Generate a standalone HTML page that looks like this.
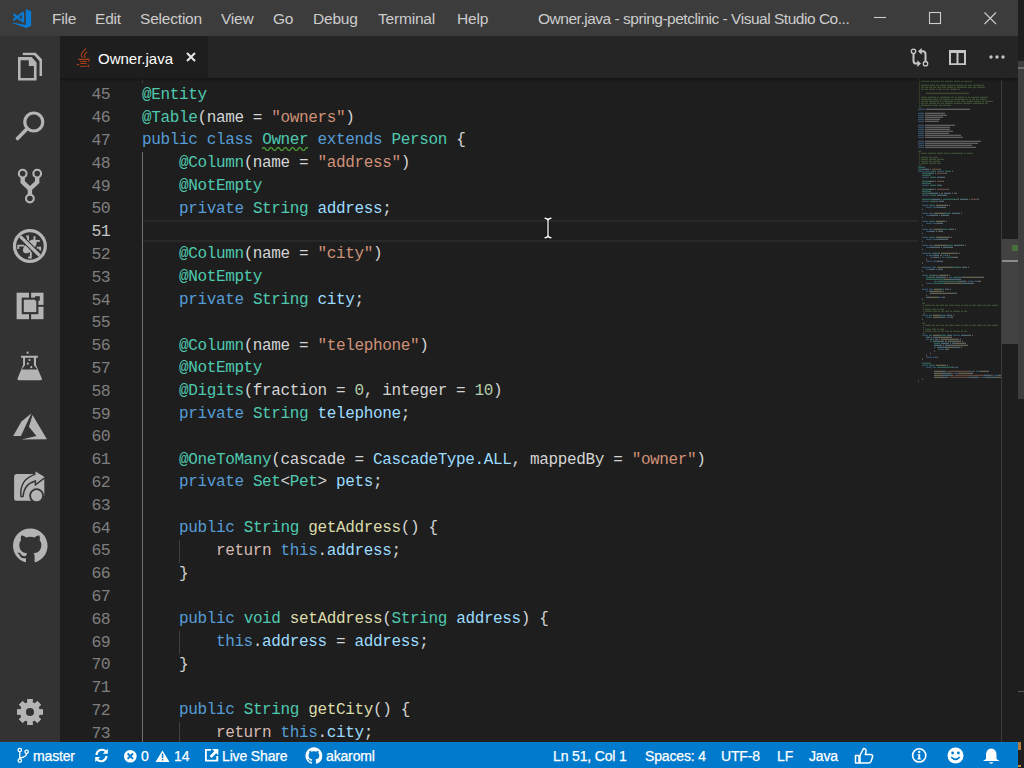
<!DOCTYPE html>
<html><head><meta charset="utf-8">
<style>
*{margin:0;padding:0;box-sizing:border-box}
html,body{width:1024px;height:768px;overflow:hidden;background:#1e1e1e;position:relative}
body{font-family:"Liberation Sans",sans-serif}
.abs{position:absolute}
#rstrip{left:1018px;top:0;width:6px;height:768px;background:#1e1e1e}
#title{left:0;top:0;width:1018px;height:36px;background:#3c3c3c;color:#cccccc;font-size:15px}
#title .m{position:absolute;top:8.6px;line-height:20px;white-space:nowrap;font-size:15.5px;letter-spacing:-0.2px}
#act{left:0;top:36px;width:60px;height:706px;background:#333333}
#tabs{left:60px;top:36px;width:958px;height:42px;background:#252526}
#tab{left:60px;top:36px;width:148px;height:42px;background:#1e1e1e;color:#fff;font-size:15px}
#editor{left:60px;top:78px;width:958px;height:664px;background:#1e1e1e;overflow:hidden}
#status{left:0;top:742px;width:1018px;height:26px;background:#007acc;color:#fff;font-size:15px}
#status .st{position:absolute;top:4px;letter-spacing:-0.15px;-webkit-text-stroke:0.25px #fff;line-height:20px;white-space:nowrap;font-size:14px}
.code{position:absolute;left:142px;font-family:"Liberation Mono",monospace;font-size:16px;letter-spacing:-0.364px;line-height:22.8px;white-space:pre;color:#d4d4d4}
.ln{position:absolute;left:60px;width:50px;margin-top:0.7px;text-align:right;font-family:"Liberation Mono",monospace;font-size:16.5px;letter-spacing:-0.7px;line-height:22.8px;color:#7e7e7e}
.ln.cur{color:#c6c6c6}
.k{color:#569cd6}.t{color:#4ec9b0}.s{color:#ce9178}.v{color:#9cdcfe}.n{color:#b5cea8}.f{color:#dcdcaa}.r{color:#d6bab2}

</style></head><body>
<div id="rstrip" class="abs"></div>
<div class="abs" style="left:1018px;top:61px;width:6px;height:338px;background:#3e3e3e"></div><div class="abs" style="left:1018px;top:67px;width:6px;height:2px;background:#6a6a6a"></div><div class="abs" style="left:1018px;top:691px;width:6px;height:1px;background:#555"></div><div class="abs" style="left:1018px;top:742px;width:3px;height:8px;background:#b87a3a"></div><div class="abs" style="left:1018px;top:765px;width:3px;height:2px;background:#c88a3a"></div>
<div id="title" class="abs">
<svg class="abs" style="left:8px;top:4px" width="28" height="28" viewBox="0 0 768 768"><g fill="#0a7ad2"><path d="M490,140L635,200V595L500,660L125,530L150,512L490,575Z"/></g><g stroke="#0a7ad2" stroke-width="58" stroke-linecap="round" fill="none"><path d="M165,290L405,478M165,428L405,240"/><path d="M412,250V472" stroke-width="62"/></g></svg><span class="m" style="left:52px">File</span><span class="m" style="left:95px">Edit</span><span class="m" style="left:140px">Selection</span><span class="m" style="left:221px">View</span><span class="m" style="left:273px">Go</span><span class="m" style="left:313px">Debug</span><span class="m" style="left:378px">Terminal</span><span class="m" style="left:457px">Help</span><span class="m" style="left:538px;letter-spacing:-0.48px">Owner.java - spring-petclinic - Visual Studio Co...</span><svg class="abs" style="left:860px;top:0" width="158" height="36" viewBox="860 0 158 36"><g stroke="#cccccc" stroke-width="1.1" fill="none"><path d="M874,17.5H886"/><rect x="929.5" y="12.5" width="11" height="11"/><path d="M984.5,12.5L996,24M996,12.5L984.5,24"/></g></svg>
</div>
<div id="act" class="abs"></div>
<svg class="abs" style="left:0;top:0" width="60" height="768" viewBox="0 0 60 768"><path fill="#b4b4b4" d="M22.8,52.7H35.6L42,59.3V76H39.5V61.3L34.4,55.2H22.8Z"/><path fill="none" stroke="#333333" stroke-width="1.6" d="M17.5,56.2H31.9L37.5,62.2"/><path fill="#b4b4b4" fill-rule="evenodd" d="M18,57H31.6L36.6,62.6V80.5H18Z M20.6,60.2H28.8V65.9H33.9V77.9H20.6Z"/><circle cx="33.8" cy="122" r="9" fill="none" stroke="#b4b4b4" stroke-width="3.2"/><path d="M26.6,129.2L17.5,138.5" stroke="#b4b4b4" stroke-width="3.6" stroke-linecap="round"/><path d="M22.7,176V182L29.9,189V194 M37.2,176V182L29.9,189" fill="none" stroke="#b4b4b4" stroke-width="4.4"/><circle cx="22.7" cy="173.6" r="4.4" fill="#333333"/><circle cx="22.7" cy="173.6" r="3.85" fill="none" stroke="#b4b4b4" stroke-width="2.1"/><circle cx="37.2" cy="173.6" r="4.4" fill="#333333"/><circle cx="37.2" cy="173.6" r="3.85" fill="none" stroke="#b4b4b4" stroke-width="2.1"/><circle cx="29.9" cy="198.5" r="4.4" fill="#333333"/><circle cx="29.9" cy="198.5" r="3.85" fill="none" stroke="#b4b4b4" stroke-width="2.1"/><circle cx="29.9" cy="246" r="15.4" fill="none" stroke="#b4b4b4" stroke-width="3.2"/><ellipse cx="29.8" cy="246.4" rx="8.6" ry="4.6" transform="rotate(-45 29.8 246.4)" fill="#b4b4b4"/><g stroke="#b4b4b4" stroke-width="1.9" fill="none"><path d="M18.2,249V245.6H24"/><path d="M26.2,236.4H28V241.5"/><path d="M34.5,236.2V240"/><path d="M35.5,240.9H39.8"/><path d="M36.8,247.7H40.2V250.5"/><path d="M30.8,252V257.5H28.2"/></g><path d="M20.2,236.4L39.7,255.7" stroke="#333333" stroke-width="5.4"/><path d="M20.2,236.4L39.7,255.7" stroke="#b4b4b4" stroke-width="3.2"/><rect x="16.6" y="292.7" width="26.9" height="26.5" fill="#b4b4b4"/><rect x="21.7" y="297.6" width="16.7" height="16.6" fill="#333333"/><rect x="23.8" y="299.7" width="12.5" height="12.4" fill="#b4b4b4"/><rect x="29" y="292" width="2.1" height="6" fill="#333333"/><rect x="29" y="314" width="2.1" height="6" fill="#333333"/><rect x="38" y="304.9" width="6" height="1.9" fill="#333333"/><rect x="35.1" y="296.2" width="4.7" height="4.5" fill="#333333"/><path d="M21,355.7H37.9V357.7H36V365L41.9,378.6Q42.5,380.3 40.6,380.3H18.8Q16.9,380.3 17.5,378.6L23.1,365V357.7H21Z" fill="#b4b4b4"/><path d="M25,357.7H33.9V365.3L37.4,369.6H21.6L25,365.3Z" fill="#333333"/><circle cx="27.6" cy="352.7" r="1.1" fill="#b4b4b4"/><circle cx="29.5" cy="360" r="1.1" fill="#b4b4b4"/><circle cx="27.8" cy="363.7" r="1.1" fill="#b4b4b4"/><circle cx="31.3" cy="367.2" r="1.1" fill="#b4b4b4"/><path d="M31.5,413.2L21.4,421.4L13.2,435.9L20.9,436.1Z" fill="#b4b4b4"/><path d="M32.6,415L46.9,439.2L21.4,439.4L36.4,436.1L28.9,426.8Z" fill="#b4b4b4"/><path d="M17,473.9H40.5Q44.3,473.9 44.3,477.7V500.8H17Q14.1,500.8 14.1,497.9V476.8Q14.1,473.9 17,473.9Z" fill="#b4b4b4"/><rect x="36.6" y="495.7" width="9" height="7" fill="#333333"/><circle cx="36.6" cy="495.7" r="7.4" fill="#333333"/><circle cx="36.6" cy="495.7" r="5.6" fill="#b4b4b4"/><path d="M21,496.5Q19,480 34.8,474.3V470.2L45.8,477L35.4,484.8V481Q24,484 23,496.5Z" fill="#b4b4b4" stroke="#333333" stroke-width="1.4"/><g transform="translate(13,528.5) scale(2.16)"><path fill="#b4b4b4" d="M8 0C3.58 0 0 3.58 0 8c0 3.54 2.29 6.53 5.47 7.59.4.07.55-.17.55-.38 0-.19-.01-.82-.01-1.49-2.01.37-2.53-.49-2.69-.94-.09-.23-.48-.94-.82-1.13-.28-.15-.68-.52-.01-.53.63-.01 1.08.58 1.23.82.72 1.21 1.87.87 2.33.66.07-.52.28-.87.51-1.07-1.78-.2-3.64-.89-3.64-3.95 0-.87.31-1.59.82-2.15-.08-.2-.36-1.02.08-2.12 0 0 .67-.21 2.2.82.64-.18 1.32-.27 2-.27.68 0 1.36.09 2 .27 1.53-1.04 2.2-.82 2.2-.82.44 1.1.16 1.92.08 2.12.51.56.82 1.27.82 2.15 0 3.07-1.87 3.75-3.65 3.95.29.25.54.73.54 1.48 0 1.07-.01 1.93-.01 2.2 0 .21.15.46.55.38A8.013 8.013 0 0016 8c0-4.42-3.58-8-8-8z"/></g><circle cx="30" cy="712" r="10" fill="#b4b4b4"/><rect x="27.4" y="699" width="5.2" height="26" fill="#b4b4b4" transform="rotate(0 30 712)"/><rect x="27.4" y="699" width="5.2" height="26" fill="#b4b4b4" transform="rotate(45 30 712)"/><rect x="27.4" y="699" width="5.2" height="26" fill="#b4b4b4" transform="rotate(90 30 712)"/><rect x="27.4" y="699" width="5.2" height="26" fill="#b4b4b4" transform="rotate(135 30 712)"/><rect x="27.4" y="699" width="5.2" height="26" fill="#b4b4b4" transform="rotate(180 30 712)"/><rect x="27.4" y="699" width="5.2" height="26" fill="#b4b4b4" transform="rotate(225 30 712)"/><rect x="27.4" y="699" width="5.2" height="26" fill="#b4b4b4" transform="rotate(270 30 712)"/><rect x="27.4" y="699" width="5.2" height="26" fill="#b4b4b4" transform="rotate(315 30 712)"/><circle cx="30" cy="712" r="4" fill="#333333"/></svg>
<div id="tabs" class="abs"></div>
<div id="tab" class="abs"><svg class="abs" style="left:14px;top:10px" width="20" height="24" viewBox="74 46 20 24"><g stroke="#a83f1b" stroke-width="1.1" fill="none" stroke-linecap="round"><path d="M85.6,48.8C84,51 81,53 81.2,55C81.3,56.5 82.4,57.3 82.4,57.3"/><path d="M86.8,52.2C84.5,53.5 83.8,55 85,57.6"/><path d="M78.5,59.4H87.5"/><path d="M80.3,61.5H86.5"/><path d="M80.6,63.5H86.2"/><path d="M80.5,66.2H87"/><path d="M77.2,64.6H78.8"/><path d="M87.8,58.5Q90.5,59 88.5,61"/><path d="M88,65Q89.5,65.5 88.5,66.5"/></g></svg><span class="abs" style="left:38px;top:13px;line-height:20px;white-space:nowrap">Owner.java</span><svg class="abs" style="left:126px;top:16px" width="10" height="10" viewBox="0 0 10 10"><path d="M1,1L9,9M9,1L1,9" stroke="#e8e8e8" stroke-width="2"/></svg></div>
<svg class="abs" style="left:900px;top:36px" width="118" height="42" viewBox="900 36 118 42"><g stroke="#c5c5c5" fill="none"><circle cx="913.5" cy="51.3" r="2.2" stroke-width="1.3"/><circle cx="925.5" cy="63.7" r="2.2" stroke-width="1.3"/><path d="M913.5,53.5V60.7Q913.5,63.6 916.4,63.6H918" stroke-width="2"/><path d="M925.5,61.5V54.3Q925.5,51.3 922.6,51.3H921" stroke-width="2"/></g><g fill="#c5c5c5"><path d="M917.3,60.2L921,63.6L917.3,67Z"/><path d="M921.7,47.9L918,51.3L921.7,54.7Z"/></g><g fill="#c5c5c5"><path fill-rule="evenodd" d="M949,50H966V65H949Z M951,53H956.5V63.2H951Z M958.5,53H964V63.2H958.5Z"/><circle cx="991" cy="57" r="1.7"/><circle cx="997" cy="57" r="1.7"/><circle cx="1003" cy="57" r="1.7"/></g></svg>
<div id="editor" class="abs"></div>
<div class="abs" style="left:143px;top:220px;width:775px;height:22px;border-top:2px solid #282828;border-bottom:2px solid #282828"></div>
<div class="abs" style="left:142px;top:78.0px;width:1px;height:4.8px;background:#404040"></div>
<div class="abs" style="left:142px;top:152.2px;width:1px;height:589.8px;background:#707070"></div>
<div class="abs" style="left:179px;top:539.8px;width:1px;height:22.8px;background:#404040"></div>
<div class="abs" style="left:179px;top:631.0px;width:1px;height:22.8px;background:#404040"></div>
<div class="abs" style="left:179px;top:722.2px;width:1px;height:19.8px;background:#404040"></div>
<div class="ln" style="top:83.8px">45</div>
<div class="code" style="top:83.8px"><span class="t">@Entity</span></div>
<div class="ln" style="top:106.6px">46</div>
<div class="code" style="top:106.6px"><span class="t">@Table</span>(name = <span class="s">"owners"</span>)</div>
<div class="ln" style="top:129.4px">47</div>
<div class="code" style="top:129.4px"><span class="k">public</span> <span class="k">class</span> <span class="t">Owner</span> <span class="k">extends</span> <span class="t">Person</span> {</div>
<div class="ln" style="top:152.2px">48</div>
<div class="code" style="top:152.2px">    <span class="t">@Column</span>(name = <span class="s">"address"</span>)</div>
<div class="ln" style="top:175.0px">49</div>
<div class="code" style="top:175.0px">    <span class="t">@NotEmpty</span></div>
<div class="ln" style="top:197.8px">50</div>
<div class="code" style="top:197.8px">    <span class="k">private</span> <span class="t">String</span> <span class="v">address</span>;</div>
<div class="ln cur" style="top:220.6px">51</div>
<div class="ln" style="top:243.4px">52</div>
<div class="code" style="top:243.4px">    <span class="t">@Column</span>(name = <span class="s">"city"</span>)</div>
<div class="ln" style="top:266.2px">53</div>
<div class="code" style="top:266.2px">    <span class="t">@NotEmpty</span></div>
<div class="ln" style="top:289.0px">54</div>
<div class="code" style="top:289.0px">    <span class="k">private</span> <span class="t">String</span> <span class="v">city</span>;</div>
<div class="ln" style="top:311.8px">55</div>
<div class="ln" style="top:334.6px">56</div>
<div class="code" style="top:334.6px">    <span class="t">@Column</span>(name = <span class="s">"telephone"</span>)</div>
<div class="ln" style="top:357.4px">57</div>
<div class="code" style="top:357.4px">    <span class="t">@NotEmpty</span></div>
<div class="ln" style="top:380.2px">58</div>
<div class="code" style="top:380.2px">    <span class="t">@Digits</span>(fraction = <span class="n">0</span>, integer = <span class="n">10</span>)</div>
<div class="ln" style="top:403.0px">59</div>
<div class="code" style="top:403.0px">    <span class="k">private</span> <span class="t">String</span> <span class="v">telephone</span>;</div>
<div class="ln" style="top:425.8px">60</div>
<div class="ln" style="top:448.6px">61</div>
<div class="code" style="top:448.6px">    <span class="t">@OneToMany</span>(cascade = <span class="v">CascadeType.ALL</span>, mappedBy = <span class="s">"owner"</span>)</div>
<div class="ln" style="top:471.4px">62</div>
<div class="code" style="top:471.4px">    <span class="k">private</span> <span class="t">Set</span>&lt;<span class="t">Pet</span>&gt; <span class="v">pets</span>;</div>
<div class="ln" style="top:494.2px">63</div>
<div class="ln" style="top:517.0px">64</div>
<div class="code" style="top:517.0px">    <span class="k">public</span> <span class="t">String</span> <span class="f">getAddress</span>() {</div>
<div class="ln" style="top:539.8px">65</div>
<div class="code" style="top:539.8px">        <span class="r">return</span> <span class="k">this</span>.<span class="v">address</span>;</div>
<div class="ln" style="top:562.6px">66</div>
<div class="code" style="top:562.6px">    }</div>
<div class="ln" style="top:585.4px">67</div>
<div class="ln" style="top:608.2px">68</div>
<div class="code" style="top:608.2px">    <span class="k">public</span> <span class="t">void</span> <span class="f">setAddress</span>(<span class="t">String</span> <span class="v">address</span>) {</div>
<div class="ln" style="top:631.0px">69</div>
<div class="code" style="top:631.0px">        <span class="k">this</span>.<span class="v">address</span> = <span class="v">address</span>;</div>
<div class="ln" style="top:653.8px">70</div>
<div class="code" style="top:653.8px">    }</div>
<div class="ln" style="top:676.6px">71</div>
<div class="ln" style="top:699.4px">72</div>
<div class="code" style="top:699.4px">    <span class="k">public</span> <span class="t">String</span> <span class="f">getCity</span>() {</div>
<div class="ln" style="top:722.2px">73</div>
<div class="code" style="top:722.2px">        <span class="r">return</span> <span class="k">this</span>.<span class="v">city</span>;</div>
<svg class="abs" style="left:262px;top:146px" width="46" height="5" viewBox="0 0 46 5"><path d="M0,3 q1.8,-3.2 3.6,0 t3.6,0 q1.8,-3.2 3.6,0 t3.6,0 q1.8,-3.2 3.6,0 t3.6,0 q1.8,-3.2 3.6,0 t3.6,0 q1.8,-3.2 3.6,0 t3.6,0 q1.8,-3.2 3.6,0 t3.6,0 q1.8,-3.2 3.6,0 t3.6,0" fill="none" stroke="#4a9638" stroke-width="1.5"/></svg>
<svg class="abs" style="left:918px;top:78px" width="84" height="320" viewBox="918 78 84 320"><g opacity="0.36"><rect x="918" y="78.7" width="2" height="1.3" fill="#6a9955"/><rect x="919" y="80.7" width="1" height="1.3" fill="#6a9955"/><rect x="921" y="80.7" width="9" height="1.3" fill="#6a9955"/><rect x="931" y="80.7" width="9" height="1.3" fill="#6a9955"/><rect x="941" y="80.7" width="3" height="1.3" fill="#6a9955"/><rect x="945" y="80.7" width="8" height="1.3" fill="#6a9955"/><rect x="954" y="80.7" width="6" height="1.3" fill="#6a9955"/><rect x="961" y="80.7" width="2" height="1.3" fill="#6a9955"/><rect x="964" y="80.7" width="8" height="1.3" fill="#6a9955"/><rect x="919" y="82.7" width="1" height="1.3" fill="#6a9955"/><rect x="919" y="84.7" width="1" height="1.3" fill="#6a9955"/><rect x="921" y="84.7" width="8" height="1.3" fill="#6a9955"/><rect x="930" y="84.7" width="5" height="1.3" fill="#6a9955"/><rect x="936" y="84.7" width="3" height="1.3" fill="#6a9955"/><rect x="940" y="84.7" width="6" height="1.3" fill="#6a9955"/><rect x="947" y="84.7" width="8" height="1.3" fill="#6a9955"/><rect x="956" y="84.7" width="7" height="1.3" fill="#6a9955"/><rect x="964" y="84.7" width="3" height="1.3" fill="#6a9955"/><rect x="968" y="84.7" width="4" height="1.3" fill="#6a9955"/><rect x="973" y="84.7" width="11" height="1.3" fill="#6a9955"/><rect x="919" y="86.7" width="1" height="1.3" fill="#6a9955"/><rect x="921" y="86.7" width="3" height="1.3" fill="#6a9955"/><rect x="925" y="86.7" width="3" height="1.3" fill="#6a9955"/><rect x="929" y="86.7" width="3" height="1.3" fill="#6a9955"/><rect x="933" y="86.7" width="3" height="1.3" fill="#6a9955"/><rect x="937" y="86.7" width="4" height="1.3" fill="#6a9955"/><rect x="942" y="86.7" width="4" height="1.3" fill="#6a9955"/><rect x="947" y="86.7" width="6" height="1.3" fill="#6a9955"/><rect x="954" y="86.7" width="2" height="1.3" fill="#6a9955"/><rect x="957" y="86.7" width="10" height="1.3" fill="#6a9955"/><rect x="968" y="86.7" width="4" height="1.3" fill="#6a9955"/><rect x="973" y="86.7" width="3" height="1.3" fill="#6a9955"/><rect x="977" y="86.7" width="8" height="1.3" fill="#6a9955"/><rect x="919" y="88.7" width="1" height="1.3" fill="#6a9955"/><rect x="921" y="88.7" width="3" height="1.3" fill="#6a9955"/><rect x="925" y="88.7" width="3" height="1.3" fill="#6a9955"/><rect x="929" y="88.7" width="6" height="1.3" fill="#6a9955"/><rect x="936" y="88.7" width="1" height="1.3" fill="#6a9955"/><rect x="938" y="88.7" width="4" height="1.3" fill="#6a9955"/><rect x="943" y="88.7" width="2" height="1.3" fill="#6a9955"/><rect x="946" y="88.7" width="3" height="1.3" fill="#6a9955"/><rect x="950" y="88.7" width="7" height="1.3" fill="#6a9955"/><rect x="958" y="88.7" width="2" height="1.3" fill="#6a9955"/><rect x="919" y="90.7" width="1" height="1.3" fill="#6a9955"/><rect x="919" y="92.7" width="1" height="1.3" fill="#6a9955"/><rect x="926" y="92.7" width="43" height="1.3" fill="#6a9955"/><rect x="919" y="94.7" width="1" height="1.3" fill="#6a9955"/><rect x="919" y="96.7" width="1" height="1.3" fill="#6a9955"/><rect x="921" y="96.7" width="6" height="1.3" fill="#6a9955"/><rect x="928" y="96.7" width="8" height="1.3" fill="#6a9955"/><rect x="937" y="96.7" width="2" height="1.3" fill="#6a9955"/><rect x="940" y="96.7" width="10" height="1.3" fill="#6a9955"/><rect x="951" y="96.7" width="3" height="1.3" fill="#6a9955"/><rect x="955" y="96.7" width="2" height="1.3" fill="#6a9955"/><rect x="958" y="96.7" width="6" height="1.3" fill="#6a9955"/><rect x="965" y="96.7" width="2" height="1.3" fill="#6a9955"/><rect x="968" y="96.7" width="2" height="1.3" fill="#6a9955"/><rect x="971" y="96.7" width="8" height="1.3" fill="#6a9955"/><rect x="980" y="96.7" width="8" height="1.3" fill="#6a9955"/><rect x="919" y="98.7" width="1" height="1.3" fill="#6a9955"/><rect x="921" y="98.7" width="11" height="1.3" fill="#6a9955"/><rect x="933" y="98.7" width="5" height="1.3" fill="#6a9955"/><rect x="939" y="98.7" width="3" height="1.3" fill="#6a9955"/><rect x="943" y="98.7" width="7" height="1.3" fill="#6a9955"/><rect x="951" y="98.7" width="2" height="1.3" fill="#6a9955"/><rect x="954" y="98.7" width="11" height="1.3" fill="#6a9955"/><rect x="966" y="98.7" width="2" height="1.3" fill="#6a9955"/><rect x="969" y="98.7" width="2" height="1.3" fill="#6a9955"/><rect x="972" y="98.7" width="3" height="1.3" fill="#6a9955"/><rect x="976" y="98.7" width="3" height="1.3" fill="#6a9955"/><rect x="980" y="98.7" width="6" height="1.3" fill="#6a9955"/><rect x="919" y="100.7" width="1" height="1.3" fill="#6a9955"/><rect x="921" y="100.7" width="7" height="1.3" fill="#6a9955"/><rect x="929" y="100.7" width="10" height="1.3" fill="#6a9955"/><rect x="940" y="100.7" width="2" height="1.3" fill="#6a9955"/><rect x="943" y="100.7" width="10" height="1.3" fill="#6a9955"/><rect x="954" y="100.7" width="2" height="1.3" fill="#6a9955"/><rect x="957" y="100.7" width="3" height="1.3" fill="#6a9955"/><rect x="961" y="100.7" width="5" height="1.3" fill="#6a9955"/><rect x="967" y="100.7" width="6" height="1.3" fill="#6a9955"/><rect x="974" y="100.7" width="7" height="1.3" fill="#6a9955"/><rect x="982" y="100.7" width="2" height="1.3" fill="#6a9955"/><rect x="985" y="100.7" width="8" height="1.3" fill="#6a9955"/><rect x="919" y="102.7" width="1" height="1.3" fill="#6a9955"/><rect x="921" y="102.7" width="3" height="1.3" fill="#6a9955"/><rect x="925" y="102.7" width="3" height="1.3" fill="#6a9955"/><rect x="929" y="102.7" width="7" height="1.3" fill="#6a9955"/><rect x="937" y="102.7" width="3" height="1.3" fill="#6a9955"/><rect x="941" y="102.7" width="3" height="1.3" fill="#6a9955"/><rect x="945" y="102.7" width="8" height="1.3" fill="#6a9955"/><rect x="954" y="102.7" width="8" height="1.3" fill="#6a9955"/><rect x="963" y="102.7" width="9" height="1.3" fill="#6a9955"/><rect x="973" y="102.7" width="11" height="1.3" fill="#6a9955"/><rect x="985" y="102.7" width="3" height="1.3" fill="#6a9955"/><rect x="919" y="104.7" width="1" height="1.3" fill="#6a9955"/><rect x="921" y="104.7" width="11" height="1.3" fill="#6a9955"/><rect x="933" y="104.7" width="5" height="1.3" fill="#6a9955"/><rect x="939" y="104.7" width="3" height="1.3" fill="#6a9955"/><rect x="943" y="104.7" width="8" height="1.3" fill="#6a9955"/><rect x="919" y="106.7" width="2" height="1.3" fill="#6a9955"/><rect x="918" y="108.7" width="7" height="1.3" fill="#569cd6"/><rect x="926" y="108.7" width="44" height="1.3" fill="#d4d4d4"/><rect x="918" y="112.7" width="6" height="1.3" fill="#569cd6"/><rect x="925" y="112.7" width="20" height="1.3" fill="#d4d4d4"/><rect x="918" y="114.7" width="6" height="1.3" fill="#569cd6"/><rect x="925" y="114.7" width="22" height="1.3" fill="#d4d4d4"/><rect x="918" y="116.7" width="6" height="1.3" fill="#569cd6"/><rect x="925" y="116.7" width="18" height="1.3" fill="#d4d4d4"/><rect x="918" y="118.7" width="6" height="1.3" fill="#569cd6"/><rect x="925" y="118.7" width="15" height="1.3" fill="#d4d4d4"/><rect x="918" y="120.7" width="6" height="1.3" fill="#569cd6"/><rect x="925" y="120.7" width="14" height="1.3" fill="#d4d4d4"/><rect x="918" y="124.7" width="6" height="1.3" fill="#569cd6"/><rect x="925" y="124.7" width="30" height="1.3" fill="#d4d4d4"/><rect x="918" y="126.7" width="6" height="1.3" fill="#569cd6"/><rect x="925" y="126.7" width="25" height="1.3" fill="#d4d4d4"/><rect x="918" y="128.7" width="6" height="1.3" fill="#569cd6"/><rect x="925" y="128.7" width="25" height="1.3" fill="#d4d4d4"/><rect x="918" y="130.7" width="6" height="1.3" fill="#569cd6"/><rect x="925" y="130.7" width="28" height="1.3" fill="#d4d4d4"/><rect x="918" y="132.7" width="6" height="1.3" fill="#569cd6"/><rect x="925" y="132.7" width="24" height="1.3" fill="#d4d4d4"/><rect x="918" y="134.7" width="6" height="1.3" fill="#569cd6"/><rect x="925" y="134.7" width="36" height="1.3" fill="#d4d4d4"/><rect x="918" y="136.7" width="6" height="1.3" fill="#569cd6"/><rect x="925" y="136.7" width="38" height="1.3" fill="#d4d4d4"/><rect x="918" y="140.7" width="6" height="1.3" fill="#569cd6"/><rect x="925" y="140.7" width="56" height="1.3" fill="#d4d4d4"/><rect x="918" y="142.7" width="6" height="1.3" fill="#569cd6"/><rect x="925" y="142.7" width="53" height="1.3" fill="#d4d4d4"/><rect x="918" y="144.7" width="6" height="1.3" fill="#569cd6"/><rect x="925" y="144.7" width="47" height="1.3" fill="#d4d4d4"/><rect x="918" y="146.7" width="6" height="1.3" fill="#569cd6"/><rect x="925" y="146.7" width="51" height="1.3" fill="#d4d4d4"/><rect x="918" y="150.7" width="3" height="1.3" fill="#6a9955"/><rect x="919" y="152.7" width="1" height="1.3" fill="#6a9955"/><rect x="921" y="152.7" width="6" height="1.3" fill="#6a9955"/><rect x="928" y="152.7" width="8" height="1.3" fill="#6a9955"/><rect x="937" y="152.7" width="6" height="1.3" fill="#6a9955"/><rect x="944" y="152.7" width="6" height="1.3" fill="#6a9955"/><rect x="951" y="152.7" width="12" height="1.3" fill="#6a9955"/><rect x="964" y="152.7" width="2" height="1.3" fill="#6a9955"/><rect x="967" y="152.7" width="6" height="1.3" fill="#6a9955"/><rect x="919" y="154.7" width="1" height="1.3" fill="#6a9955"/><rect x="919" y="156.7" width="1" height="1.3" fill="#6a9955"/><rect x="921" y="156.7" width="7" height="1.3" fill="#6a9955"/><rect x="929" y="156.7" width="3" height="1.3" fill="#6a9955"/><rect x="933" y="156.7" width="5" height="1.3" fill="#6a9955"/><rect x="919" y="158.7" width="1" height="1.3" fill="#6a9955"/><rect x="921" y="158.7" width="7" height="1.3" fill="#6a9955"/><rect x="929" y="158.7" width="7" height="1.3" fill="#6a9955"/><rect x="937" y="158.7" width="7" height="1.3" fill="#6a9955"/><rect x="919" y="160.7" width="1" height="1.3" fill="#6a9955"/><rect x="921" y="160.7" width="7" height="1.3" fill="#6a9955"/><rect x="929" y="160.7" width="3" height="1.3" fill="#6a9955"/><rect x="933" y="160.7" width="7" height="1.3" fill="#6a9955"/><rect x="919" y="162.7" width="1" height="1.3" fill="#6a9955"/><rect x="921" y="162.7" width="7" height="1.3" fill="#6a9955"/><rect x="929" y="162.7" width="7" height="1.3" fill="#6a9955"/><rect x="937" y="162.7" width="4" height="1.3" fill="#6a9955"/><rect x="919" y="164.7" width="2" height="1.3" fill="#6a9955"/><rect x="918" y="166.7" width="7" height="1.3" fill="#4ec9b0"/><rect x="918" y="168.7" width="6" height="1.3" fill="#4ec9b0"/><rect x="924" y="168.7" width="1" height="1.3" fill="#d4d4d4"/><rect x="925" y="168.7" width="4" height="1.3" fill="#9cdcfe"/><rect x="930" y="168.7" width="1" height="1.3" fill="#d4d4d4"/><rect x="932" y="168.7" width="8" height="1.3" fill="#ce9178"/><rect x="940" y="168.7" width="1" height="1.3" fill="#d4d4d4"/><rect x="918" y="170.7" width="6" height="1.3" fill="#569cd6"/><rect x="925" y="170.7" width="5" height="1.3" fill="#569cd6"/><rect x="931" y="170.7" width="5" height="1.3" fill="#4ec9b0"/><rect x="937" y="170.7" width="7" height="1.3" fill="#569cd6"/><rect x="945" y="170.7" width="6" height="1.3" fill="#4ec9b0"/><rect x="952" y="170.7" width="1" height="1.3" fill="#d4d4d4"/><rect x="922" y="172.7" width="7" height="1.3" fill="#4ec9b0"/><rect x="929" y="172.7" width="1" height="1.3" fill="#d4d4d4"/><rect x="930" y="172.7" width="4" height="1.3" fill="#9cdcfe"/><rect x="935" y="172.7" width="1" height="1.3" fill="#d4d4d4"/><rect x="937" y="172.7" width="9" height="1.3" fill="#ce9178"/><rect x="946" y="172.7" width="1" height="1.3" fill="#d4d4d4"/><rect x="922" y="174.7" width="9" height="1.3" fill="#4ec9b0"/><rect x="922" y="176.7" width="7" height="1.3" fill="#569cd6"/><rect x="930" y="176.7" width="6" height="1.3" fill="#4ec9b0"/><rect x="937" y="176.7" width="7" height="1.3" fill="#9cdcfe"/><rect x="944" y="176.7" width="1" height="1.3" fill="#d4d4d4"/><rect x="922" y="180.7" width="7" height="1.3" fill="#4ec9b0"/><rect x="929" y="180.7" width="1" height="1.3" fill="#d4d4d4"/><rect x="930" y="180.7" width="4" height="1.3" fill="#9cdcfe"/><rect x="935" y="180.7" width="1" height="1.3" fill="#d4d4d4"/><rect x="937" y="180.7" width="6" height="1.3" fill="#ce9178"/><rect x="943" y="180.7" width="1" height="1.3" fill="#d4d4d4"/><rect x="922" y="182.7" width="9" height="1.3" fill="#4ec9b0"/><rect x="922" y="184.7" width="7" height="1.3" fill="#569cd6"/><rect x="930" y="184.7" width="6" height="1.3" fill="#4ec9b0"/><rect x="937" y="184.7" width="4" height="1.3" fill="#9cdcfe"/><rect x="941" y="184.7" width="1" height="1.3" fill="#d4d4d4"/><rect x="922" y="188.7" width="7" height="1.3" fill="#4ec9b0"/><rect x="929" y="188.7" width="1" height="1.3" fill="#d4d4d4"/><rect x="930" y="188.7" width="4" height="1.3" fill="#9cdcfe"/><rect x="935" y="188.7" width="1" height="1.3" fill="#d4d4d4"/><rect x="937" y="188.7" width="11" height="1.3" fill="#ce9178"/><rect x="948" y="188.7" width="1" height="1.3" fill="#d4d4d4"/><rect x="922" y="190.7" width="9" height="1.3" fill="#4ec9b0"/><rect x="922" y="192.7" width="7" height="1.3" fill="#4ec9b0"/><rect x="929" y="192.7" width="1" height="1.3" fill="#d4d4d4"/><rect x="930" y="192.7" width="8" height="1.3" fill="#9cdcfe"/><rect x="939" y="192.7" width="1" height="1.3" fill="#d4d4d4"/><rect x="941" y="192.7" width="1" height="1.3" fill="#b5cea8"/><rect x="942" y="192.7" width="1" height="1.3" fill="#d4d4d4"/><rect x="944" y="192.7" width="7" height="1.3" fill="#9cdcfe"/><rect x="952" y="192.7" width="1" height="1.3" fill="#d4d4d4"/><rect x="954" y="192.7" width="2" height="1.3" fill="#b5cea8"/><rect x="956" y="192.7" width="1" height="1.3" fill="#d4d4d4"/><rect x="922" y="194.7" width="7" height="1.3" fill="#569cd6"/><rect x="930" y="194.7" width="6" height="1.3" fill="#4ec9b0"/><rect x="937" y="194.7" width="9" height="1.3" fill="#9cdcfe"/><rect x="946" y="194.7" width="1" height="1.3" fill="#d4d4d4"/><rect x="922" y="198.7" width="10" height="1.3" fill="#4ec9b0"/><rect x="932" y="198.7" width="1" height="1.3" fill="#d4d4d4"/><rect x="933" y="198.7" width="7" height="1.3" fill="#9cdcfe"/><rect x="941" y="198.7" width="1" height="1.3" fill="#d4d4d4"/><rect x="943" y="198.7" width="11" height="1.3" fill="#4ec9b0"/><rect x="954" y="198.7" width="1" height="1.3" fill="#d4d4d4"/><rect x="955" y="198.7" width="3" height="1.3" fill="#4ec9b0"/><rect x="958" y="198.7" width="1" height="1.3" fill="#d4d4d4"/><rect x="960" y="198.7" width="8" height="1.3" fill="#9cdcfe"/><rect x="969" y="198.7" width="1" height="1.3" fill="#d4d4d4"/><rect x="971" y="198.7" width="7" height="1.3" fill="#ce9178"/><rect x="978" y="198.7" width="1" height="1.3" fill="#d4d4d4"/><rect x="922" y="200.7" width="7" height="1.3" fill="#569cd6"/><rect x="930" y="200.7" width="3" height="1.3" fill="#4ec9b0"/><rect x="933" y="200.7" width="1" height="1.3" fill="#d4d4d4"/><rect x="934" y="200.7" width="3" height="1.3" fill="#4ec9b0"/><rect x="937" y="200.7" width="1" height="1.3" fill="#d4d4d4"/><rect x="939" y="200.7" width="4" height="1.3" fill="#9cdcfe"/><rect x="943" y="200.7" width="1" height="1.3" fill="#d4d4d4"/><rect x="922" y="204.7" width="6" height="1.3" fill="#569cd6"/><rect x="929" y="204.7" width="6" height="1.3" fill="#4ec9b0"/><rect x="936" y="204.7" width="10" height="1.3" fill="#dcdcaa"/><rect x="946" y="204.7" width="2" height="1.3" fill="#d4d4d4"/><rect x="949" y="204.7" width="1" height="1.3" fill="#d4d4d4"/><rect x="926" y="206.7" width="6" height="1.3" fill="#569cd6"/><rect x="933" y="206.7" width="4" height="1.3" fill="#569cd6"/><rect x="937" y="206.7" width="1" height="1.3" fill="#d4d4d4"/><rect x="938" y="206.7" width="7" height="1.3" fill="#9cdcfe"/><rect x="945" y="206.7" width="1" height="1.3" fill="#d4d4d4"/><rect x="922" y="208.7" width="1" height="1.3" fill="#d4d4d4"/><rect x="922" y="212.7" width="6" height="1.3" fill="#569cd6"/><rect x="929" y="212.7" width="4" height="1.3" fill="#569cd6"/><rect x="934" y="212.7" width="10" height="1.3" fill="#dcdcaa"/><rect x="944" y="212.7" width="1" height="1.3" fill="#d4d4d4"/><rect x="945" y="212.7" width="6" height="1.3" fill="#4ec9b0"/><rect x="952" y="212.7" width="7" height="1.3" fill="#9cdcfe"/><rect x="959" y="212.7" width="1" height="1.3" fill="#d4d4d4"/><rect x="961" y="212.7" width="1" height="1.3" fill="#d4d4d4"/><rect x="926" y="214.7" width="4" height="1.3" fill="#569cd6"/><rect x="930" y="214.7" width="1" height="1.3" fill="#d4d4d4"/><rect x="931" y="214.7" width="7" height="1.3" fill="#9cdcfe"/><rect x="939" y="214.7" width="1" height="1.3" fill="#d4d4d4"/><rect x="941" y="214.7" width="7" height="1.3" fill="#9cdcfe"/><rect x="948" y="214.7" width="1" height="1.3" fill="#d4d4d4"/><rect x="922" y="216.7" width="1" height="1.3" fill="#d4d4d4"/><rect x="922" y="220.7" width="6" height="1.3" fill="#569cd6"/><rect x="929" y="220.7" width="6" height="1.3" fill="#4ec9b0"/><rect x="936" y="220.7" width="7" height="1.3" fill="#dcdcaa"/><rect x="943" y="220.7" width="2" height="1.3" fill="#d4d4d4"/><rect x="946" y="220.7" width="1" height="1.3" fill="#d4d4d4"/><rect x="926" y="222.7" width="6" height="1.3" fill="#569cd6"/><rect x="933" y="222.7" width="4" height="1.3" fill="#569cd6"/><rect x="937" y="222.7" width="1" height="1.3" fill="#d4d4d4"/><rect x="938" y="222.7" width="4" height="1.3" fill="#9cdcfe"/><rect x="942" y="222.7" width="1" height="1.3" fill="#d4d4d4"/><rect x="922" y="224.7" width="1" height="1.3" fill="#d4d4d4"/><rect x="922" y="228.7" width="6" height="1.3" fill="#569cd6"/><rect x="929" y="228.7" width="4" height="1.3" fill="#569cd6"/><rect x="934" y="228.7" width="7" height="1.3" fill="#dcdcaa"/><rect x="941" y="228.7" width="1" height="1.3" fill="#d4d4d4"/><rect x="942" y="228.7" width="6" height="1.3" fill="#4ec9b0"/><rect x="949" y="228.7" width="4" height="1.3" fill="#9cdcfe"/><rect x="953" y="228.7" width="1" height="1.3" fill="#d4d4d4"/><rect x="955" y="228.7" width="1" height="1.3" fill="#d4d4d4"/><rect x="926" y="230.7" width="4" height="1.3" fill="#569cd6"/><rect x="930" y="230.7" width="1" height="1.3" fill="#d4d4d4"/><rect x="931" y="230.7" width="4" height="1.3" fill="#9cdcfe"/><rect x="936" y="230.7" width="1" height="1.3" fill="#d4d4d4"/><rect x="938" y="230.7" width="4" height="1.3" fill="#9cdcfe"/><rect x="942" y="230.7" width="1" height="1.3" fill="#d4d4d4"/><rect x="922" y="232.7" width="1" height="1.3" fill="#d4d4d4"/><rect x="922" y="236.7" width="6" height="1.3" fill="#569cd6"/><rect x="929" y="236.7" width="6" height="1.3" fill="#4ec9b0"/><rect x="936" y="236.7" width="12" height="1.3" fill="#dcdcaa"/><rect x="948" y="236.7" width="2" height="1.3" fill="#d4d4d4"/><rect x="951" y="236.7" width="1" height="1.3" fill="#d4d4d4"/><rect x="926" y="238.7" width="6" height="1.3" fill="#569cd6"/><rect x="933" y="238.7" width="4" height="1.3" fill="#569cd6"/><rect x="937" y="238.7" width="1" height="1.3" fill="#d4d4d4"/><rect x="938" y="238.7" width="9" height="1.3" fill="#9cdcfe"/><rect x="947" y="238.7" width="1" height="1.3" fill="#d4d4d4"/><rect x="922" y="240.7" width="1" height="1.3" fill="#d4d4d4"/><rect x="922" y="244.7" width="6" height="1.3" fill="#569cd6"/><rect x="929" y="244.7" width="4" height="1.3" fill="#569cd6"/><rect x="934" y="244.7" width="12" height="1.3" fill="#dcdcaa"/><rect x="946" y="244.7" width="1" height="1.3" fill="#d4d4d4"/><rect x="947" y="244.7" width="6" height="1.3" fill="#4ec9b0"/><rect x="954" y="244.7" width="9" height="1.3" fill="#9cdcfe"/><rect x="963" y="244.7" width="1" height="1.3" fill="#d4d4d4"/><rect x="965" y="244.7" width="1" height="1.3" fill="#d4d4d4"/><rect x="926" y="246.7" width="4" height="1.3" fill="#569cd6"/><rect x="930" y="246.7" width="1" height="1.3" fill="#d4d4d4"/><rect x="931" y="246.7" width="9" height="1.3" fill="#9cdcfe"/><rect x="941" y="246.7" width="1" height="1.3" fill="#d4d4d4"/><rect x="943" y="246.7" width="9" height="1.3" fill="#9cdcfe"/><rect x="952" y="246.7" width="1" height="1.3" fill="#d4d4d4"/><rect x="922" y="248.7" width="1" height="1.3" fill="#d4d4d4"/><rect x="922" y="252.7" width="9" height="1.3" fill="#569cd6"/><rect x="932" y="252.7" width="3" height="1.3" fill="#4ec9b0"/><rect x="935" y="252.7" width="1" height="1.3" fill="#d4d4d4"/><rect x="936" y="252.7" width="3" height="1.3" fill="#4ec9b0"/><rect x="939" y="252.7" width="1" height="1.3" fill="#d4d4d4"/><rect x="941" y="252.7" width="15" height="1.3" fill="#dcdcaa"/><rect x="956" y="252.7" width="2" height="1.3" fill="#d4d4d4"/><rect x="959" y="252.7" width="1" height="1.3" fill="#d4d4d4"/><rect x="926" y="254.7" width="2" height="1.3" fill="#569cd6"/><rect x="929" y="254.7" width="1" height="1.3" fill="#d4d4d4"/><rect x="930" y="254.7" width="4" height="1.3" fill="#569cd6"/><rect x="934" y="254.7" width="1" height="1.3" fill="#d4d4d4"/><rect x="935" y="254.7" width="4" height="1.3" fill="#9cdcfe"/><rect x="940" y="254.7" width="2" height="1.3" fill="#d4d4d4"/><rect x="943" y="254.7" width="4" height="1.3" fill="#569cd6"/><rect x="947" y="254.7" width="1" height="1.3" fill="#d4d4d4"/><rect x="949" y="254.7" width="1" height="1.3" fill="#d4d4d4"/><rect x="930" y="256.7" width="4" height="1.3" fill="#569cd6"/><rect x="934" y="256.7" width="1" height="1.3" fill="#d4d4d4"/><rect x="935" y="256.7" width="4" height="1.3" fill="#9cdcfe"/><rect x="940" y="256.7" width="1" height="1.3" fill="#d4d4d4"/><rect x="942" y="256.7" width="3" height="1.3" fill="#569cd6"/><rect x="946" y="256.7" width="7" height="1.3" fill="#4ec9b0"/><rect x="953" y="256.7" width="5" height="1.3" fill="#d4d4d4"/><rect x="926" y="258.7" width="1" height="1.3" fill="#d4d4d4"/><rect x="926" y="260.7" width="6" height="1.3" fill="#569cd6"/><rect x="933" y="260.7" width="4" height="1.3" fill="#569cd6"/><rect x="937" y="260.7" width="1" height="1.3" fill="#d4d4d4"/><rect x="938" y="260.7" width="4" height="1.3" fill="#9cdcfe"/><rect x="942" y="260.7" width="1" height="1.3" fill="#d4d4d4"/><rect x="922" y="262.7" width="1" height="1.3" fill="#d4d4d4"/><rect x="922" y="266.7" width="9" height="1.3" fill="#569cd6"/><rect x="932" y="266.7" width="4" height="1.3" fill="#569cd6"/><rect x="937" y="266.7" width="15" height="1.3" fill="#dcdcaa"/><rect x="952" y="266.7" width="1" height="1.3" fill="#d4d4d4"/><rect x="953" y="266.7" width="3" height="1.3" fill="#4ec9b0"/><rect x="956" y="266.7" width="1" height="1.3" fill="#d4d4d4"/><rect x="957" y="266.7" width="3" height="1.3" fill="#4ec9b0"/><rect x="960" y="266.7" width="1" height="1.3" fill="#d4d4d4"/><rect x="962" y="266.7" width="4" height="1.3" fill="#9cdcfe"/><rect x="966" y="266.7" width="1" height="1.3" fill="#d4d4d4"/><rect x="968" y="266.7" width="1" height="1.3" fill="#d4d4d4"/><rect x="926" y="268.7" width="4" height="1.3" fill="#569cd6"/><rect x="930" y="268.7" width="1" height="1.3" fill="#d4d4d4"/><rect x="931" y="268.7" width="4" height="1.3" fill="#9cdcfe"/><rect x="936" y="268.7" width="1" height="1.3" fill="#d4d4d4"/><rect x="938" y="268.7" width="4" height="1.3" fill="#9cdcfe"/><rect x="942" y="268.7" width="1" height="1.3" fill="#d4d4d4"/><rect x="922" y="270.7" width="1" height="1.3" fill="#d4d4d4"/><rect x="922" y="274.7" width="6" height="1.3" fill="#569cd6"/><rect x="929" y="274.7" width="4" height="1.3" fill="#4ec9b0"/><rect x="933" y="274.7" width="1" height="1.3" fill="#d4d4d4"/><rect x="934" y="274.7" width="3" height="1.3" fill="#4ec9b0"/><rect x="937" y="274.7" width="1" height="1.3" fill="#d4d4d4"/><rect x="939" y="274.7" width="7" height="1.3" fill="#dcdcaa"/><rect x="946" y="274.7" width="2" height="1.3" fill="#d4d4d4"/><rect x="949" y="274.7" width="1" height="1.3" fill="#d4d4d4"/><rect x="926" y="276.7" width="4" height="1.3" fill="#4ec9b0"/><rect x="930" y="276.7" width="1" height="1.3" fill="#d4d4d4"/><rect x="931" y="276.7" width="3" height="1.3" fill="#4ec9b0"/><rect x="934" y="276.7" width="1" height="1.3" fill="#d4d4d4"/><rect x="936" y="276.7" width="10" height="1.3" fill="#9cdcfe"/><rect x="947" y="276.7" width="1" height="1.3" fill="#d4d4d4"/><rect x="949" y="276.7" width="3" height="1.3" fill="#569cd6"/><rect x="953" y="276.7" width="9" height="1.3" fill="#4ec9b0"/><rect x="962" y="276.7" width="3" height="1.3" fill="#d4d4d4"/><rect x="965" y="276.7" width="15" height="1.3" fill="#dcdcaa"/><rect x="980" y="276.7" width="4" height="1.3" fill="#d4d4d4"/><rect x="926" y="278.7" width="18" height="1.3" fill="#4ec9b0"/><rect x="944" y="278.7" width="1" height="1.3" fill="#d4d4d4"/><rect x="945" y="278.7" width="4" height="1.3" fill="#dcdcaa"/><rect x="949" y="278.7" width="1" height="1.3" fill="#d4d4d4"/><rect x="950" y="278.7" width="10" height="1.3" fill="#9cdcfe"/><rect x="960" y="278.7" width="1" height="1.3" fill="#d4d4d4"/><rect x="934" y="280.7" width="3" height="1.3" fill="#569cd6"/><rect x="938" y="280.7" width="21" height="1.3" fill="#4ec9b0"/><rect x="959" y="280.7" width="2" height="1.3" fill="#d4d4d4"/><rect x="961" y="280.7" width="4" height="1.3" fill="#9cdcfe"/><rect x="965" y="280.7" width="2" height="1.3" fill="#ce9178"/><rect x="968" y="280.7" width="4" height="1.3" fill="#569cd6"/><rect x="972" y="280.7" width="1" height="1.3" fill="#d4d4d4"/><rect x="974" y="280.7" width="4" height="1.3" fill="#569cd6"/><rect x="978" y="280.7" width="3" height="1.3" fill="#d4d4d4"/><rect x="926" y="282.7" width="6" height="1.3" fill="#569cd6"/><rect x="933" y="282.7" width="11" height="1.3" fill="#4ec9b0"/><rect x="944" y="282.7" width="1" height="1.3" fill="#d4d4d4"/><rect x="945" y="282.7" width="16" height="1.3" fill="#dcdcaa"/><rect x="961" y="282.7" width="1" height="1.3" fill="#d4d4d4"/><rect x="962" y="282.7" width="10" height="1.3" fill="#9cdcfe"/><rect x="972" y="282.7" width="2" height="1.3" fill="#d4d4d4"/><rect x="922" y="284.7" width="1" height="1.3" fill="#d4d4d4"/><rect x="922" y="288.7" width="6" height="1.3" fill="#569cd6"/><rect x="929" y="288.7" width="4" height="1.3" fill="#569cd6"/><rect x="934" y="288.7" width="6" height="1.3" fill="#dcdcaa"/><rect x="940" y="288.7" width="1" height="1.3" fill="#d4d4d4"/><rect x="941" y="288.7" width="3" height="1.3" fill="#4ec9b0"/><rect x="945" y="288.7" width="3" height="1.3" fill="#9cdcfe"/><rect x="948" y="288.7" width="1" height="1.3" fill="#d4d4d4"/><rect x="950" y="288.7" width="1" height="1.3" fill="#d4d4d4"/><rect x="926" y="290.7" width="2" height="1.3" fill="#569cd6"/><rect x="929" y="290.7" width="1" height="1.3" fill="#d4d4d4"/><rect x="930" y="290.7" width="3" height="1.3" fill="#9cdcfe"/><rect x="933" y="290.7" width="1" height="1.3" fill="#d4d4d4"/><rect x="934" y="290.7" width="5" height="1.3" fill="#dcdcaa"/><rect x="939" y="290.7" width="3" height="1.3" fill="#d4d4d4"/><rect x="943" y="290.7" width="1" height="1.3" fill="#d4d4d4"/><rect x="930" y="292.7" width="15" height="1.3" fill="#dcdcaa"/><rect x="945" y="292.7" width="3" height="1.3" fill="#d4d4d4"/><rect x="948" y="292.7" width="3" height="1.3" fill="#dcdcaa"/><rect x="951" y="292.7" width="1" height="1.3" fill="#d4d4d4"/><rect x="952" y="292.7" width="3" height="1.3" fill="#9cdcfe"/><rect x="955" y="292.7" width="2" height="1.3" fill="#d4d4d4"/><rect x="926" y="294.7" width="1" height="1.3" fill="#d4d4d4"/><rect x="926" y="296.7" width="3" height="1.3" fill="#9cdcfe"/><rect x="929" y="296.7" width="1" height="1.3" fill="#d4d4d4"/><rect x="930" y="296.7" width="8" height="1.3" fill="#dcdcaa"/><rect x="938" y="296.7" width="1" height="1.3" fill="#d4d4d4"/><rect x="939" y="296.7" width="4" height="1.3" fill="#569cd6"/><rect x="943" y="296.7" width="2" height="1.3" fill="#d4d4d4"/><rect x="922" y="298.7" width="1" height="1.3" fill="#d4d4d4"/><rect x="922" y="302.7" width="3" height="1.3" fill="#6a9955"/><rect x="923" y="304.7" width="1" height="1.3" fill="#6a9955"/><rect x="925" y="304.7" width="6" height="1.3" fill="#6a9955"/><rect x="932" y="304.7" width="3" height="1.3" fill="#6a9955"/><rect x="936" y="304.7" width="3" height="1.3" fill="#6a9955"/><rect x="940" y="304.7" width="4" height="1.3" fill="#6a9955"/><rect x="945" y="304.7" width="3" height="1.3" fill="#6a9955"/><rect x="949" y="304.7" width="5" height="1.3" fill="#6a9955"/><rect x="955" y="304.7" width="5" height="1.3" fill="#6a9955"/><rect x="961" y="304.7" width="2" height="1.3" fill="#6a9955"/><rect x="964" y="304.7" width="4" height="1.3" fill="#6a9955"/><rect x="969" y="304.7" width="2" height="1.3" fill="#6a9955"/><rect x="972" y="304.7" width="4" height="1.3" fill="#6a9955"/><rect x="977" y="304.7" width="5" height="1.3" fill="#6a9955"/><rect x="983" y="304.7" width="3" height="1.3" fill="#6a9955"/><rect x="987" y="304.7" width="4" height="1.3" fill="#6a9955"/><rect x="992" y="304.7" width="6" height="1.3" fill="#6a9955"/><rect x="923" y="306.7" width="1" height="1.3" fill="#6a9955"/><rect x="923" y="308.7" width="1" height="1.3" fill="#6a9955"/><rect x="925" y="308.7" width="6" height="1.3" fill="#6a9955"/><rect x="932" y="308.7" width="4" height="1.3" fill="#6a9955"/><rect x="937" y="308.7" width="2" height="1.3" fill="#6a9955"/><rect x="940" y="308.7" width="4" height="1.3" fill="#6a9955"/><rect x="923" y="310.7" width="1" height="1.3" fill="#6a9955"/><rect x="925" y="310.7" width="7" height="1.3" fill="#6a9955"/><rect x="933" y="310.7" width="4" height="1.3" fill="#6a9955"/><rect x="938" y="310.7" width="2" height="1.3" fill="#6a9955"/><rect x="941" y="310.7" width="3" height="1.3" fill="#6a9955"/><rect x="945" y="310.7" width="4" height="1.3" fill="#6a9955"/><rect x="950" y="310.7" width="2" height="1.3" fill="#6a9955"/><rect x="953" y="310.7" width="7" height="1.3" fill="#6a9955"/><rect x="961" y="310.7" width="2" height="1.3" fill="#6a9955"/><rect x="964" y="310.7" width="3" height="1.3" fill="#6a9955"/><rect x="923" y="312.7" width="2" height="1.3" fill="#6a9955"/><rect x="922" y="314.7" width="6" height="1.3" fill="#569cd6"/><rect x="929" y="314.7" width="3" height="1.3" fill="#4ec9b0"/><rect x="933" y="314.7" width="6" height="1.3" fill="#dcdcaa"/><rect x="939" y="314.7" width="1" height="1.3" fill="#d4d4d4"/><rect x="940" y="314.7" width="6" height="1.3" fill="#4ec9b0"/><rect x="947" y="314.7" width="4" height="1.3" fill="#9cdcfe"/><rect x="951" y="314.7" width="1" height="1.3" fill="#d4d4d4"/><rect x="953" y="314.7" width="1" height="1.3" fill="#d4d4d4"/><rect x="926" y="316.7" width="6" height="1.3" fill="#569cd6"/><rect x="933" y="316.7" width="6" height="1.3" fill="#dcdcaa"/><rect x="939" y="316.7" width="1" height="1.3" fill="#d4d4d4"/><rect x="940" y="316.7" width="4" height="1.3" fill="#9cdcfe"/><rect x="944" y="316.7" width="1" height="1.3" fill="#d4d4d4"/><rect x="946" y="316.7" width="5" height="1.3" fill="#569cd6"/><rect x="951" y="316.7" width="2" height="1.3" fill="#d4d4d4"/><rect x="922" y="318.7" width="1" height="1.3" fill="#d4d4d4"/><rect x="922" y="322.7" width="3" height="1.3" fill="#6a9955"/><rect x="923" y="324.7" width="1" height="1.3" fill="#6a9955"/><rect x="925" y="324.7" width="6" height="1.3" fill="#6a9955"/><rect x="932" y="324.7" width="3" height="1.3" fill="#6a9955"/><rect x="936" y="324.7" width="3" height="1.3" fill="#6a9955"/><rect x="940" y="324.7" width="4" height="1.3" fill="#6a9955"/><rect x="945" y="324.7" width="3" height="1.3" fill="#6a9955"/><rect x="949" y="324.7" width="5" height="1.3" fill="#6a9955"/><rect x="955" y="324.7" width="5" height="1.3" fill="#6a9955"/><rect x="961" y="324.7" width="2" height="1.3" fill="#6a9955"/><rect x="964" y="324.7" width="4" height="1.3" fill="#6a9955"/><rect x="969" y="324.7" width="2" height="1.3" fill="#6a9955"/><rect x="972" y="324.7" width="4" height="1.3" fill="#6a9955"/><rect x="977" y="324.7" width="5" height="1.3" fill="#6a9955"/><rect x="983" y="324.7" width="3" height="1.3" fill="#6a9955"/><rect x="987" y="324.7" width="4" height="1.3" fill="#6a9955"/><rect x="992" y="324.7" width="6" height="1.3" fill="#6a9955"/><rect x="923" y="326.7" width="1" height="1.3" fill="#6a9955"/><rect x="923" y="328.7" width="1" height="1.3" fill="#6a9955"/><rect x="925" y="328.7" width="6" height="1.3" fill="#6a9955"/><rect x="932" y="328.7" width="4" height="1.3" fill="#6a9955"/><rect x="937" y="328.7" width="2" height="1.3" fill="#6a9955"/><rect x="940" y="328.7" width="4" height="1.3" fill="#6a9955"/><rect x="923" y="330.7" width="1" height="1.3" fill="#6a9955"/><rect x="925" y="330.7" width="7" height="1.3" fill="#6a9955"/><rect x="933" y="330.7" width="4" height="1.3" fill="#6a9955"/><rect x="938" y="330.7" width="2" height="1.3" fill="#6a9955"/><rect x="941" y="330.7" width="3" height="1.3" fill="#6a9955"/><rect x="945" y="330.7" width="4" height="1.3" fill="#6a9955"/><rect x="950" y="330.7" width="2" height="1.3" fill="#6a9955"/><rect x="953" y="330.7" width="7" height="1.3" fill="#6a9955"/><rect x="961" y="330.7" width="2" height="1.3" fill="#6a9955"/><rect x="964" y="330.7" width="3" height="1.3" fill="#6a9955"/><rect x="923" y="332.7" width="2" height="1.3" fill="#6a9955"/><rect x="922" y="334.7" width="6" height="1.3" fill="#569cd6"/><rect x="929" y="334.7" width="3" height="1.3" fill="#4ec9b0"/><rect x="933" y="334.7" width="6" height="1.3" fill="#dcdcaa"/><rect x="939" y="334.7" width="1" height="1.3" fill="#d4d4d4"/><rect x="940" y="334.7" width="6" height="1.3" fill="#4ec9b0"/><rect x="947" y="334.7" width="4" height="1.3" fill="#9cdcfe"/><rect x="951" y="334.7" width="1" height="1.3" fill="#d4d4d4"/><rect x="953" y="334.7" width="7" height="1.3" fill="#569cd6"/><rect x="961" y="334.7" width="9" height="1.3" fill="#9cdcfe"/><rect x="970" y="334.7" width="1" height="1.3" fill="#d4d4d4"/><rect x="972" y="334.7" width="1" height="1.3" fill="#d4d4d4"/><rect x="926" y="336.7" width="4" height="1.3" fill="#9cdcfe"/><rect x="931" y="336.7" width="1" height="1.3" fill="#d4d4d4"/><rect x="933" y="336.7" width="4" height="1.3" fill="#9cdcfe"/><rect x="937" y="336.7" width="1" height="1.3" fill="#d4d4d4"/><rect x="938" y="336.7" width="11" height="1.3" fill="#dcdcaa"/><rect x="949" y="336.7" width="3" height="1.3" fill="#d4d4d4"/><rect x="926" y="338.7" width="3" height="1.3" fill="#569cd6"/><rect x="930" y="338.7" width="1" height="1.3" fill="#d4d4d4"/><rect x="931" y="338.7" width="3" height="1.3" fill="#4ec9b0"/><rect x="935" y="338.7" width="3" height="1.3" fill="#9cdcfe"/><rect x="939" y="338.7" width="1" height="1.3" fill="#d4d4d4"/><rect x="941" y="338.7" width="15" height="1.3" fill="#dcdcaa"/><rect x="956" y="338.7" width="3" height="1.3" fill="#d4d4d4"/><rect x="960" y="338.7" width="1" height="1.3" fill="#d4d4d4"/><rect x="930" y="340.7" width="2" height="1.3" fill="#569cd6"/><rect x="933" y="340.7" width="2" height="1.3" fill="#d4d4d4"/><rect x="935" y="340.7" width="9" height="1.3" fill="#9cdcfe"/><rect x="945" y="340.7" width="2" height="1.3" fill="#d4d4d4"/><rect x="948" y="340.7" width="1" height="1.3" fill="#d4d4d4"/><rect x="949" y="340.7" width="3" height="1.3" fill="#9cdcfe"/><rect x="952" y="340.7" width="1" height="1.3" fill="#d4d4d4"/><rect x="953" y="340.7" width="5" height="1.3" fill="#dcdcaa"/><rect x="958" y="340.7" width="3" height="1.3" fill="#d4d4d4"/><rect x="962" y="340.7" width="1" height="1.3" fill="#d4d4d4"/><rect x="934" y="342.7" width="6" height="1.3" fill="#4ec9b0"/><rect x="941" y="342.7" width="8" height="1.3" fill="#9cdcfe"/><rect x="950" y="342.7" width="1" height="1.3" fill="#d4d4d4"/><rect x="952" y="342.7" width="3" height="1.3" fill="#9cdcfe"/><rect x="955" y="342.7" width="1" height="1.3" fill="#d4d4d4"/><rect x="956" y="342.7" width="7" height="1.3" fill="#dcdcaa"/><rect x="963" y="342.7" width="3" height="1.3" fill="#d4d4d4"/><rect x="934" y="344.7" width="8" height="1.3" fill="#9cdcfe"/><rect x="943" y="344.7" width="1" height="1.3" fill="#d4d4d4"/><rect x="945" y="344.7" width="8" height="1.3" fill="#9cdcfe"/><rect x="953" y="344.7" width="1" height="1.3" fill="#d4d4d4"/><rect x="954" y="344.7" width="11" height="1.3" fill="#dcdcaa"/><rect x="965" y="344.7" width="3" height="1.3" fill="#d4d4d4"/><rect x="934" y="346.7" width="2" height="1.3" fill="#569cd6"/><rect x="937" y="346.7" width="1" height="1.3" fill="#d4d4d4"/><rect x="938" y="346.7" width="8" height="1.3" fill="#9cdcfe"/><rect x="946" y="346.7" width="1" height="1.3" fill="#d4d4d4"/><rect x="947" y="346.7" width="6" height="1.3" fill="#dcdcaa"/><rect x="953" y="346.7" width="1" height="1.3" fill="#d4d4d4"/><rect x="954" y="346.7" width="4" height="1.3" fill="#9cdcfe"/><rect x="958" y="346.7" width="2" height="1.3" fill="#d4d4d4"/><rect x="961" y="346.7" width="1" height="1.3" fill="#d4d4d4"/><rect x="938" y="348.7" width="6" height="1.3" fill="#569cd6"/><rect x="945" y="348.7" width="3" height="1.3" fill="#9cdcfe"/><rect x="948" y="348.7" width="1" height="1.3" fill="#d4d4d4"/><rect x="934" y="350.7" width="1" height="1.3" fill="#d4d4d4"/><rect x="930" y="352.7" width="1" height="1.3" fill="#d4d4d4"/><rect x="926" y="354.7" width="1" height="1.3" fill="#d4d4d4"/><rect x="926" y="356.7" width="6" height="1.3" fill="#569cd6"/><rect x="933" y="356.7" width="4" height="1.3" fill="#569cd6"/><rect x="937" y="356.7" width="1" height="1.3" fill="#d4d4d4"/><rect x="922" y="358.7" width="1" height="1.3" fill="#d4d4d4"/><rect x="922" y="362.7" width="9" height="1.3" fill="#4ec9b0"/><rect x="922" y="364.7" width="6" height="1.3" fill="#569cd6"/><rect x="929" y="364.7" width="6" height="1.3" fill="#4ec9b0"/><rect x="936" y="364.7" width="8" height="1.3" fill="#dcdcaa"/><rect x="944" y="364.7" width="2" height="1.3" fill="#d4d4d4"/><rect x="947" y="364.7" width="1" height="1.3" fill="#d4d4d4"/><rect x="926" y="366.7" width="6" height="1.3" fill="#569cd6"/><rect x="933" y="366.7" width="3" height="1.3" fill="#569cd6"/><rect x="937" y="366.7" width="15" height="1.3" fill="#4ec9b0"/><rect x="952" y="366.7" width="1" height="1.3" fill="#d4d4d4"/><rect x="953" y="366.7" width="4" height="1.3" fill="#569cd6"/><rect x="957" y="366.7" width="1" height="1.3" fill="#d4d4d4"/><rect x="934" y="370.7" width="1" height="1.3" fill="#d4d4d4"/><rect x="935" y="370.7" width="6" height="1.3" fill="#dcdcaa"/><rect x="941" y="370.7" width="2" height="1.3" fill="#d4d4d4"/><rect x="943" y="370.7" width="2" height="1.3" fill="#9cdcfe"/><rect x="945" y="370.7" width="2" height="1.3" fill="#ce9178"/><rect x="948" y="370.7" width="22" height="1.3" fill="#ce9178"/><rect x="970" y="370.7" width="3" height="1.3" fill="#569cd6"/><rect x="973" y="370.7" width="2" height="1.3" fill="#ce9178"/><rect x="976" y="370.7" width="4" height="1.3" fill="#569cd6"/><rect x="980" y="370.7" width="1" height="1.3" fill="#d4d4d4"/><rect x="981" y="370.7" width="5" height="1.3" fill="#dcdcaa"/><rect x="986" y="370.7" width="3" height="1.3" fill="#d4d4d4"/><rect x="934" y="372.7" width="1" height="1.3" fill="#d4d4d4"/><rect x="935" y="372.7" width="6" height="1.3" fill="#dcdcaa"/><rect x="941" y="372.7" width="2" height="1.3" fill="#d4d4d4"/><rect x="943" y="372.7" width="8" height="1.3" fill="#9cdcfe"/><rect x="951" y="372.7" width="2" height="1.3" fill="#ce9178"/><rect x="954" y="372.7" width="4" height="1.3" fill="#569cd6"/><rect x="958" y="372.7" width="1" height="1.3" fill="#d4d4d4"/><rect x="959" y="372.7" width="11" height="1.3" fill="#dcdcaa"/><rect x="970" y="372.7" width="3" height="1.3" fill="#d4d4d4"/><rect x="934" y="374.7" width="1" height="1.3" fill="#d4d4d4"/><rect x="935" y="374.7" width="6" height="1.3" fill="#dcdcaa"/><rect x="941" y="374.7" width="2" height="1.3" fill="#d4d4d4"/><rect x="943" y="374.7" width="9" height="1.3" fill="#9cdcfe"/><rect x="952" y="374.7" width="2" height="1.3" fill="#ce9178"/><rect x="955" y="374.7" width="29" height="1.3" fill="#ce9178"/><rect x="984" y="374.7" width="7" height="1.3" fill="#9cdcfe"/><rect x="991" y="374.7" width="2" height="1.3" fill="#ce9178"/><rect x="994" y="374.7" width="4" height="1.3" fill="#569cd6"/><rect x="998" y="374.7" width="1" height="1.3" fill="#d4d4d4"/><rect x="999" y="374.7" width="7" height="1.3" fill="#9cdcfe"/><rect x="1006" y="374.7" width="1" height="1.3" fill="#d4d4d4"/><rect x="934" y="376.7" width="1" height="1.3" fill="#d4d4d4"/><rect x="935" y="376.7" width="6" height="1.3" fill="#dcdcaa"/><rect x="941" y="376.7" width="2" height="1.3" fill="#d4d4d4"/><rect x="943" y="376.7" width="4" height="1.3" fill="#9cdcfe"/><rect x="947" y="376.7" width="2" height="1.3" fill="#ce9178"/><rect x="950" y="376.7" width="19" height="1.3" fill="#ce9178"/><rect x="969" y="376.7" width="9" height="1.3" fill="#9cdcfe"/><rect x="978" y="376.7" width="2" height="1.3" fill="#ce9178"/><rect x="981" y="376.7" width="4" height="1.3" fill="#569cd6"/><rect x="985" y="376.7" width="1" height="1.3" fill="#d4d4d4"/><rect x="986" y="376.7" width="9" height="1.3" fill="#9cdcfe"/><rect x="995" y="376.7" width="2" height="1.3" fill="#d4d4d4"/><rect x="997" y="376.7" width="8" height="1.3" fill="#dcdcaa"/><rect x="1005" y="376.7" width="3" height="1.3" fill="#d4d4d4"/><rect x="922" y="378.7" width="1" height="1.3" fill="#d4d4d4"/><rect x="918" y="380.7" width="1" height="1.3" fill="#d4d4d4"/></g></svg><div class="abs" style="left:1001px;top:78px;width:1px;height:664px;background:#3b3b3b"></div><div class="abs" style="left:1002px;top:239px;width:16px;height:105px;background:#424242"></div><div class="abs" style="left:1012px;top:245px;width:6px;height:6px;background:#46703c"></div><div class="abs" style="left:1002px;top:260px;width:16px;height:2px;background:#8c8c8c"></div><div class="abs" style="left:60px;top:78px;width:958px;height:4px;background:linear-gradient(#141414,rgba(30,30,30,0))"></div><svg class="abs" style="left:542px;top:216px" width="12" height="24" viewBox="542 216 12 24"><path d="M544.5,218.3Q547.5,218 548,220.5V235.5Q547.5,238 544.5,237.7 M551.5,218.3Q548.5,218 548,220.5 M548,235.5Q548.5,238 551.5,237.7" fill="none" stroke="#000" stroke-width="2.6"/><path d="M544.5,218.3Q547.5,218 548,220.5V235.5Q547.5,238 544.5,237.7 M551.5,218.3Q548.5,218 548,220.5 M548,235.5Q548.5,238 551.5,237.7" fill="none" stroke="#fff" stroke-width="1.3"/></svg>
<div id="status" class="abs">
<svg class="abs" style="left:0;top:0" width="1018" height="26" viewBox="0 742 1018 26"><g stroke="#fff" fill="none" stroke-width="1.3"><circle cx="19.8" cy="750" r="1.7"/><circle cx="19.8" cy="760.6" r="1.7"/><circle cx="26.6" cy="751.8" r="1.7"/><path d="M19.8,751.7V758.9"/><path d="M26.6,753.5Q26.6,757 19.8,758"/><path d="M96.5,755A5.5,5.5 0 0 1 106,751.5" stroke-width="2.1"/><path d="M106.5,756A5.5,5.5 0 0 1 97,759.5" stroke-width="2.1"/></g><g fill="#fff"><path d="M107.8,748.8V753.8H102.8Z"/><path d="M95.2,762V757H100.2Z"/><circle cx="130.3" cy="756.2" r="6.3"/><path d="M162.5,750.5L169.5,762H155.5Z"/><path fill-rule="evenodd" d="M205,749H211V750.8H206.8V759.7H216.3V756H218.2V761.5H205Z"/><path d="M212,749H218.3V755.3L216.2,753.2L211.5,757.9L209.6,756L214.3,751.3Z"/></g><g stroke="#007acc" stroke-width="1.9"><path d="M127.6,753.5L133,758.9M133,753.5L127.6,758.9"/></g><g fill="#007acc"><rect x="161.8" y="753.5" width="1.5" height="4.5"/><rect x="161.8" y="759" width="1.5" height="1.5"/></g><g transform="translate(305.5,747.3) scale(1.05)"><path fill="#fff" d="M8 0C3.58 0 0 3.58 0 8c0 3.54 2.29 6.53 5.47 7.59.4.07.55-.17.55-.38 0-.19-.01-.82-.01-1.49-2.01.37-2.53-.49-2.69-.94-.09-.23-.48-.94-.82-1.130-.28-.15-.68-.52-.01-.53.63-.01 1.08.58 1.23.82.72 1.21 1.87.87 2.33.66.07-.52.28-.87.51-1.07-1.78-.2-3.64-.89-3.64-3.95 0-.87.31-1.59.82-2.15-.08-.2-.36-1.02.08-2.12 0 0 .67-.21 2.2.82.64-.18 1.32-.27 2-.27.68 0 1.36.09 2 .27 1.53-1.04 2.2-.82 2.2-.82.44 1.1.16 1.92.08 2.12.51.56.82 1.27.82 2.15 0 3.07-1.87 3.75-3.65 3.95.29.25.54.73.54 1.48 0 1.07-.01 1.93-.01 2.2 0 .21.15.46.55.38A8.013 8.013 0 0016 8c0-4.42-3.58-8-8-8z"/></g><path d="M855.5,755.5H859V763H855.5Z M860,755.5L863.5,748.5Q866.5,748.5 866,752L865.3,754.5H871Q873,755 872.5,757L871,761.5Q870.3,763 868.5,763H860Z" fill="none" stroke="#fff" stroke-width="1.5" stroke-linejoin="round"/><circle cx="919.2" cy="755.4" r="6.6" fill="none" stroke="#fff" stroke-width="1.6"/><circle cx="919.2" cy="752" r="1.2" fill="#fff"/><path d="M917.5,754.3H920.2V758.5H921.2V759.5H917.3V758.5H918.3V755.3H917.5Z" fill="#fff"/><circle cx="955.5" cy="755.5" r="8" fill="#fff"/><g fill="#007acc"><circle cx="952.6" cy="753" r="1.4"/><circle cx="958.4" cy="753" r="1.4"/></g><path d="M951.2,757Q955.5,761.8 959.8,757" fill="none" stroke="#007acc" stroke-width="1.6"/><path d="M991.2,748.5Q996.5,749 996.5,755V759L999.5,761H983L986,759V755Q986,749 991.2,748.5Z" fill="#fff"/><path d="M989,762.2Q991.2,765.5 993.4,762.2Z" fill="#fff"/></svg><span class="st" style="left:33px">master</span><span class="st" style="left:141px">0</span><span class="st" style="left:174px">14</span><span class="st" style="left:222px">Live Share</span><span class="st" style="left:326px">akaroml</span><span class="st" style="left:553px">Ln 51, Col 1</span><span class="st" style="left:645px">Spaces: 4</span><span class="st" style="left:721px">UTF-8</span><span class="st" style="left:777px">LF</span><span class="st" style="left:809px">Java</span>
</div>
</body></html>
